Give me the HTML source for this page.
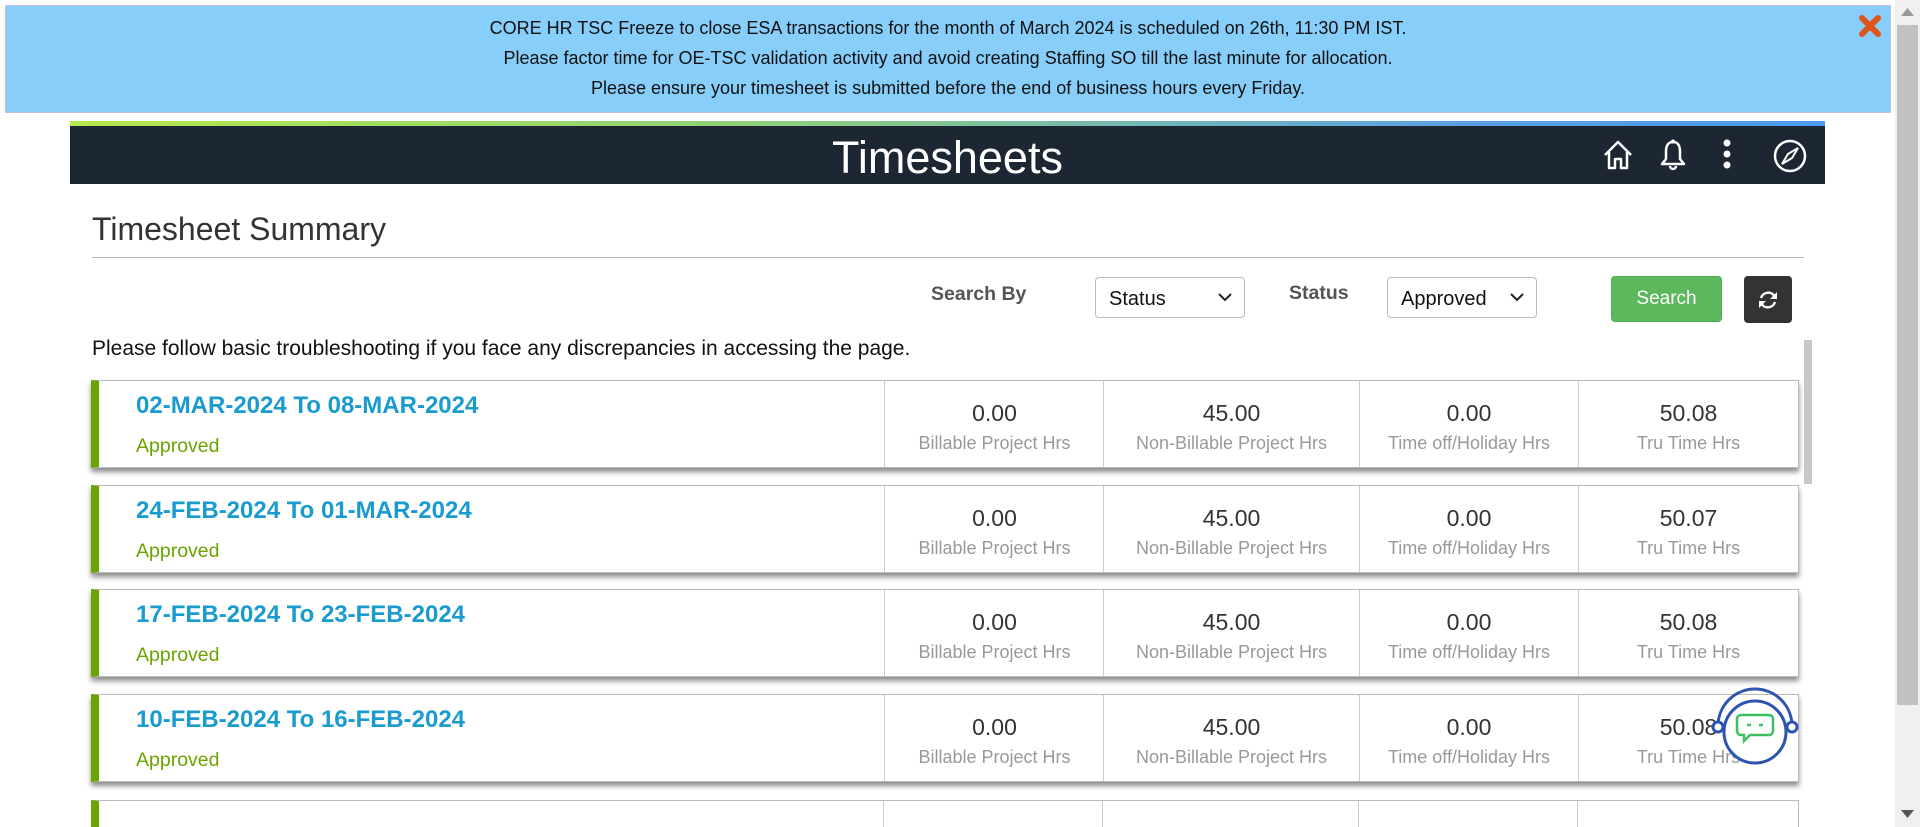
<!DOCTYPE html>
<html><head><meta charset="utf-8"><style>
*{box-sizing:border-box;margin:0;padding:0}
html,body{width:1920px;height:827px;overflow:hidden}
body{background:#fff;font-family:"Liberation Sans",Arial,sans-serif;position:relative}
.banner{position:absolute;left:5px;top:5px;width:1886px;height:108px;background:#87cefa;border:1px dotted #f0b8b8;text-align:center;font-size:18px;color:#111}
.banner div{position:absolute;left:0;right:0}
.x{position:absolute;left:1858px;top:14px;width:24px;height:24px}
.sb{position:absolute;left:1895px;top:0;width:25px;height:827px;background:#f0f0f0}
.sb .th{position:absolute;left:2px;top:25px;width:21px;height:680px;background:#c1c1c1}
.hdr{position:absolute;left:70px;top:121px;width:1755px;height:63px;background:#1d2633}
.hdr .g{position:absolute;left:0;top:0;width:100%;height:5px;background:linear-gradient(90deg,#b5e84a,#8dd07a 40%,#5aa0e8 80%,#4a9cf0)}
.hdr h1{position:absolute;left:0;right:0;top:11px;text-align:center;color:#fff;font-weight:normal;font-size:45px;line-height:52px}
.ic{position:absolute;top:139px}
h2{position:absolute;left:92px;top:211px;font-size:32px;font-weight:normal;color:#333}
.hr{position:absolute;left:92px;top:257px;width:1712px;height:1px;background:#bbb}
.lbl{position:absolute;font-size:19.5px;font-weight:bold;color:#555}
.sel{position:absolute;top:277px;height:41px;border:1px solid #bbb;border-radius:4px;font-size:20px;color:#111;padding:10px 0 0 13px}
.sel svg{position:absolute;right:12px;top:15px}
.btn{position:absolute;left:1611px;top:276px;width:111px;height:46px;background:#5cb85c;border:1px solid #4cae4c;border-radius:4px;color:#fff;font-size:19px;text-align:center;line-height:44px}
.rf{position:absolute;left:1744px;top:276px;width:48px;height:47px;background:#333;border-radius:4px}
.msg{position:absolute;left:92px;top:337px;font-size:21px;color:#111}
.row{position:absolute;left:91px;width:1708px;height:88px;border:1px solid #bbb;border-left:8px solid #6aa400;box-shadow:0 4px 5px rgba(0,0,0,.45);background:#fff}
.row .d{position:absolute;left:37px;top:11px;font-size:24px;font-weight:bold;color:#1a9bd0}
.row .s{position:absolute;left:37px;top:54px;font-size:19.5px;color:#6aa400}
.c{position:absolute;top:0;height:86px;border-left:1px solid #ccc;text-align:center}
.c .n{margin-top:19px;font-size:23px;color:#333}
.c .l{margin-top:6px;font-size:18px;color:#999}
.isb{position:absolute;left:1804px;top:340px;width:8px;height:144px;background:#c8c8c8}
</style></head><body>
<div class="banner">
<div style="top:12px">CORE HR TSC Freeze to close ESA transactions for the month of March 2024 is scheduled on 26th, 11:30 PM IST.</div>
<div style="top:42px">Please factor time for OE-TSC validation activity and avoid creating Staffing SO till the last minute for allocation.</div>
<div style="top:72px">Please ensure your timesheet is submitted before the end of business hours every Friday.</div>
</div>
<svg class="x" viewBox="0 0 24 24"><path d="M4 4L20 20M20 4L4 20" stroke="#e0561a" stroke-width="6" stroke-linecap="round"/></svg>
<div class="sb"><svg style="position:absolute;left:6px;top:8px" width="13" height="8"><path d="M0 8L6.5 0L13 8Z" fill="#999"/></svg><div class="th"></div><svg style="position:absolute;left:6px;top:810px" width="13" height="8"><path d="M0 0L6.5 8L13 0Z" fill="#555"/></svg></div>
<div class="hdr"><div class="g"></div><h1>Timesheets</h1></div>
<svg class="ic" style="left:1602px" width="32" height="32" viewBox="0 0 32 32"><path d="M3 16L16 3L29 16M7 13V29H13V20H19V29H25V13" fill="none" stroke="#fff" stroke-width="2.5" stroke-linejoin="round"/></svg>
<svg class="ic" style="left:1659px" width="28" height="32" viewBox="0 0 28 32"><path d="M14 3C8 3 7 8 7 13V20L3 25H25L21 20V13C21 8 20 3 14 3ZM11 27A3 3 0 0 0 17 27" fill="none" stroke="#fff" stroke-width="2.5" stroke-linejoin="round"/><circle cx="14" cy="2.5" r="2" fill="#fff"/></svg>
<svg class="ic" style="left:1719px" width="16" height="32" viewBox="0 0 16 32"><circle cx="8" cy="4" r="3.5" fill="#fff"/><circle cx="8" cy="15" r="3.5" fill="#fff"/><circle cx="8" cy="26" r="3.5" fill="#fff"/></svg>
<svg class="ic" style="left:1773px" width="34" height="34" viewBox="0 0 34 34"><circle cx="17" cy="17" r="15" fill="none" stroke="#fff" stroke-width="2.5"/><path d="M25 9L19 19L9 25L15 15Z" fill="none" stroke="#fff" stroke-width="2"/></svg>
<h2>Timesheet Summary</h2><div class="hr"></div>
<div class="lbl" style="left:931px;top:283px">Search By</div>
<div class="sel" style="left:1095px;width:150px">Status<svg width="14" height="9"><path d="M1 1L7 7L13 1" fill="none" stroke="#222" stroke-width="2"/></svg></div>
<div class="lbl" style="left:1289px;top:282px">Status</div>
<div class="sel" style="left:1387px;width:150px">Approved<svg width="14" height="9"><path d="M1 1L7 7L13 1" fill="none" stroke="#222" stroke-width="2"/></svg></div>
<div class="btn">Search</div>
<div class="rf"><svg style="position:absolute;left:13px;top:13px" width="22" height="22" viewBox="0 0 22 22"><path d="M4 9A7.5 7.5 0 0 1 18 8M18 13A7.5 7.5 0 0 1 4 14" fill="none" stroke="#fff" stroke-width="2.4"/><path d="M20 3V10H13Z M2 19V12H9Z" fill="#fff"/></svg></div>
<div class="msg">Please follow basic troubleshooting if you face any discrepancies in accessing the page.</div>
<div class="isb"></div>

<div class="row" style="top:380px"><div class="d">02-MAR-2024 To 08-MAR-2024</div><div class="s">Approved</div>
<div class="c" style="left:785px;width:220px"><div class="n">0.00</div><div class="l">Billable Project Hrs</div></div>
<div class="c" style="left:1004px;width:256px"><div class="n">45.00</div><div class="l">Non-Billable Project Hrs</div></div>
<div class="c" style="left:1260px;width:219px"><div class="n">0.00</div><div class="l">Time off/Holiday Hrs</div></div>
<div class="c" style="left:1479px;width:220px"><div class="n">50.08</div><div class="l">Tru Time Hrs</div></div></div>

<div class="row" style="top:485px"><div class="d">24-FEB-2024 To 01-MAR-2024</div><div class="s">Approved</div>
<div class="c" style="left:785px;width:220px"><div class="n">0.00</div><div class="l">Billable Project Hrs</div></div>
<div class="c" style="left:1004px;width:256px"><div class="n">45.00</div><div class="l">Non-Billable Project Hrs</div></div>
<div class="c" style="left:1260px;width:219px"><div class="n">0.00</div><div class="l">Time off/Holiday Hrs</div></div>
<div class="c" style="left:1479px;width:220px"><div class="n">50.07</div><div class="l">Tru Time Hrs</div></div></div>

<div class="row" style="top:589px"><div class="d">17-FEB-2024 To 23-FEB-2024</div><div class="s">Approved</div>
<div class="c" style="left:785px;width:220px"><div class="n">0.00</div><div class="l">Billable Project Hrs</div></div>
<div class="c" style="left:1004px;width:256px"><div class="n">45.00</div><div class="l">Non-Billable Project Hrs</div></div>
<div class="c" style="left:1260px;width:219px"><div class="n">0.00</div><div class="l">Time off/Holiday Hrs</div></div>
<div class="c" style="left:1479px;width:220px"><div class="n">50.08</div><div class="l">Tru Time Hrs</div></div></div>

<div class="row" style="top:694px"><div class="d">10-FEB-2024 To 16-FEB-2024</div><div class="s">Approved</div>
<div class="c" style="left:785px;width:220px"><div class="n">0.00</div><div class="l">Billable Project Hrs</div></div>
<div class="c" style="left:1004px;width:256px"><div class="n">45.00</div><div class="l">Non-Billable Project Hrs</div></div>
<div class="c" style="left:1260px;width:219px"><div class="n">0.00</div><div class="l">Time off/Holiday Hrs</div></div>
<div class="c" style="left:1479px;width:220px"><div class="n">50.08</div><div class="l">Tru Time Hrs</div></div></div>

<div style="position:absolute;left:91px;top:800px;width:1708px;height:27px;border-top:1px solid #bbb;border-right:1px solid #bbb;border-left:8px solid #6aa400;overflow:hidden">
<div style="position:absolute;left:784px;top:0;width:1px;height:27px;background:#ccc"></div><div style="position:absolute;left:1003px;top:0;width:1px;height:27px;background:#ccc"></div><div style="position:absolute;left:1259px;top:0;width:1px;height:27px;background:#ccc"></div><div style="position:absolute;left:1478px;top:0;width:1px;height:27px;background:#ccc"></div></div>

<svg style="position:absolute;left:1708px;top:684px" width="94" height="86" viewBox="0 0 94 86">
<path d="M10 42A37 37 0 0 1 84 42" fill="none" stroke="#2d55b0" stroke-width="3"/>
<circle cx="47" cy="48" r="31" fill="#fff" stroke="#2d55b0" stroke-width="3"/>
<circle cx="10" cy="43" r="5" fill="#fff" stroke="#2d55b0" stroke-width="3"/>
<circle cx="84" cy="43" r="5" fill="#fff" stroke="#2d55b0" stroke-width="3"/>
<path d="M33 31H61A4 4 0 0 1 65 35V47A4 4 0 0 1 61 51H42L36 57V51H33A4 4 0 0 1 29 47V35A4 4 0 0 1 33 31Z" fill="#fff" stroke="#3bbf5f" stroke-width="2.5"/>
<path d="M39 41H43M51 41H55" stroke="#3bbf5f" stroke-width="2.5"/>
</svg>
</body></html>
